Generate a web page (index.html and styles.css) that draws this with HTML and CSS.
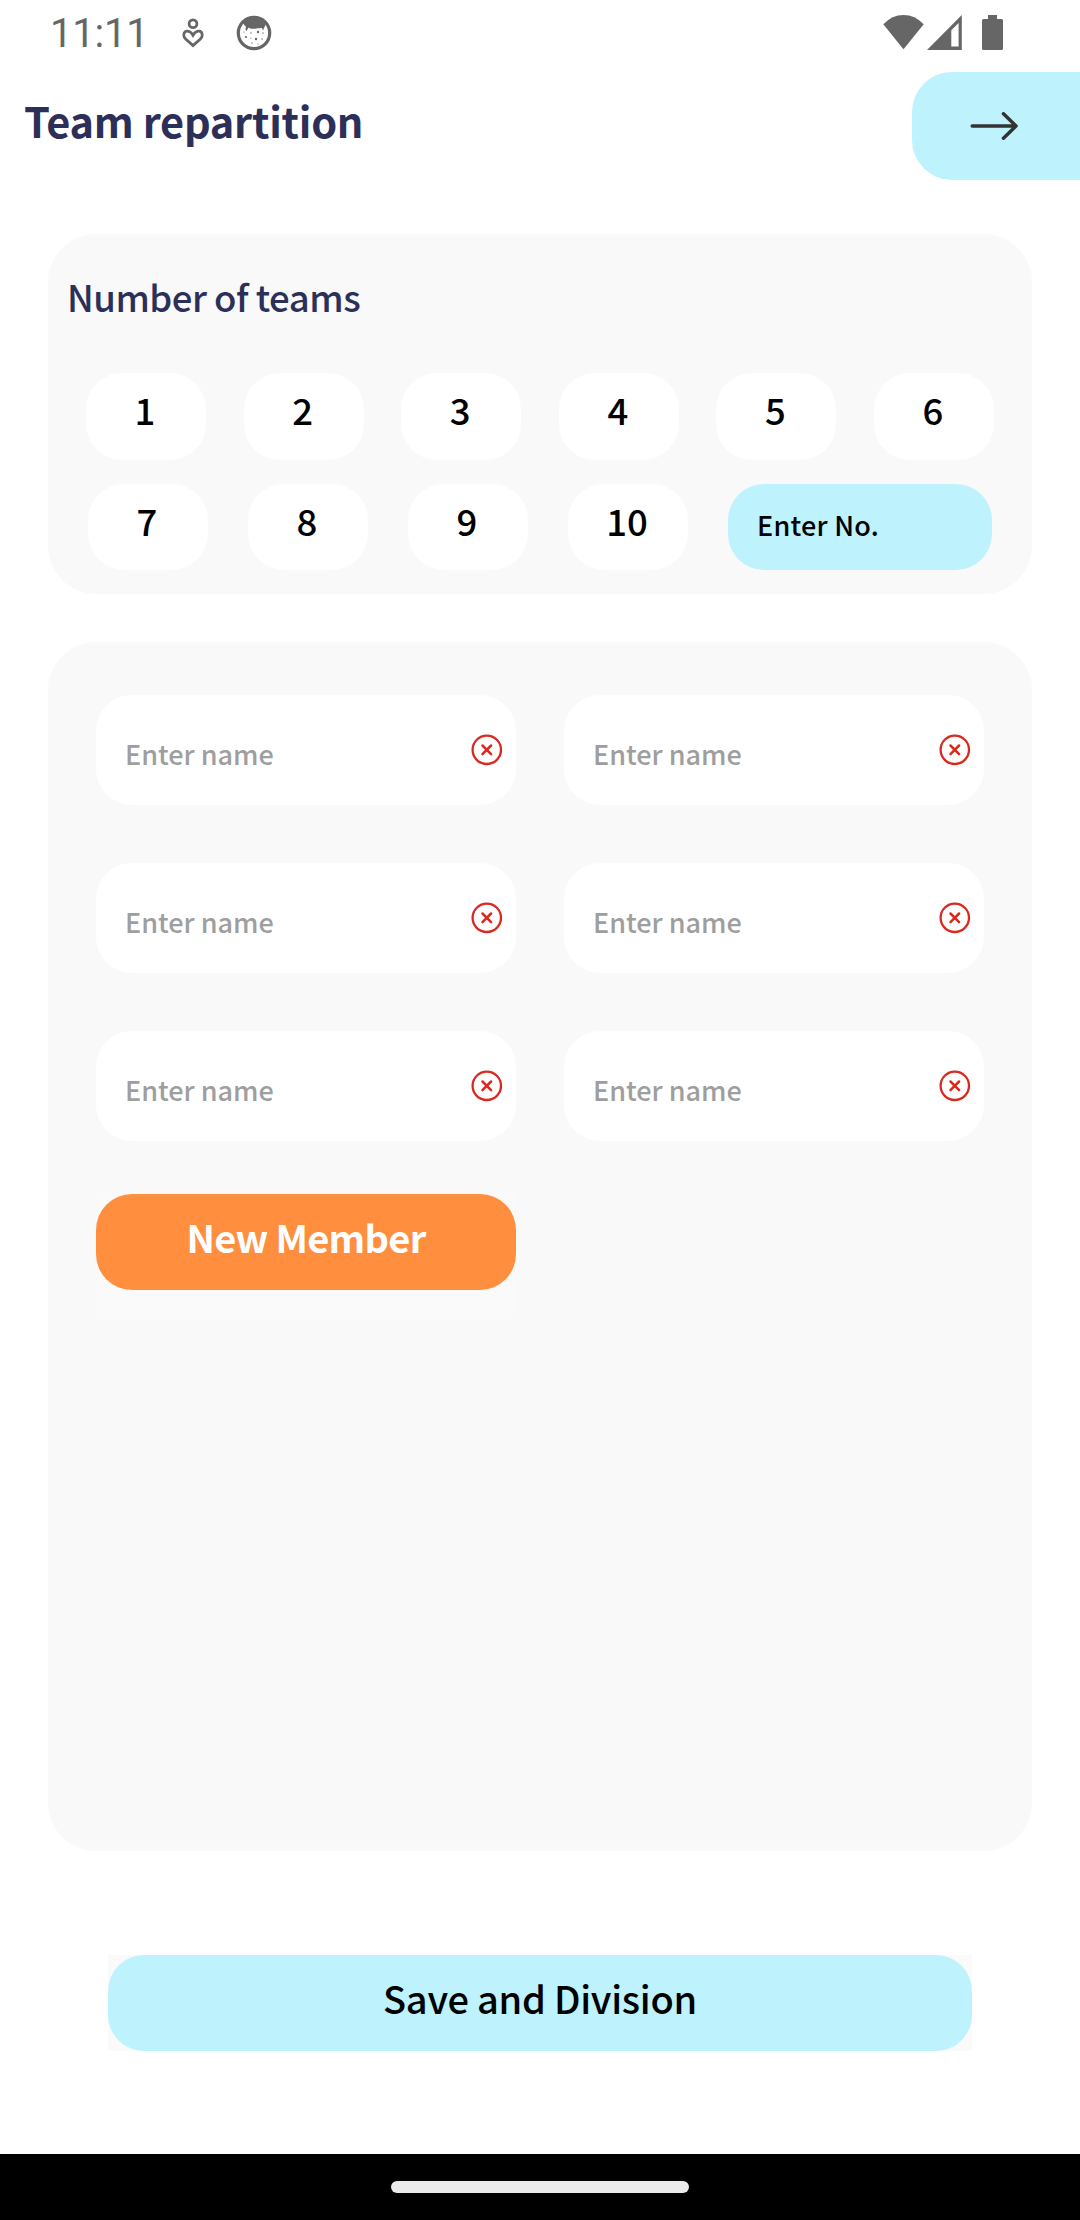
FILE: index.html
```html
<!DOCTYPE html>
<html lang="en">
<head>
<meta charset="utf-8">
<title>Team repartition</title>
<link rel="stylesheet" href="styles.css">
</head>
<body>
<svg width="0" height="0" class="defs">
  <symbol id="remove" viewBox="0 0 32 32">
    <g fill="none" stroke="#d92a1f" stroke-linecap="round">
      <circle cx="15.800" cy="15.800" r="14.200" stroke-width="2.300"/>
      <path d="M11.500 11.500 20.100 20.100M20.100 11.500 11.500 20.100" stroke-width="2.500"/>
    </g>
  </symbol>
</svg>
<div class="screen">
  <div class="status">
    <span class="clock">11:11</span>
    <svg class="heart" width="24" height="32" viewBox="0 0 24 32">
      <g fill="none" stroke="#666" stroke-width="2.8">
        <circle cx="12" cy="6.7" r="3.9"/>
        <path d="M12 18.2C9.800 14.300 7.500 14.100 6 14.100C3.300 14.100 2.800 16.600 2.800 18.400C2.800 20.300 4 21.300 5.200 22.500L12 28.600L18.800 22.500C20 21.300 21.200 20.300 21.200 18.400C21.200 16.600 20.700 14.100 18 14.100C16.500 14.100 14.200 14.300 12 18.200Z"/>
      </g>
    </svg>
    <svg class="face" width="36" height="36" viewBox="0 0 36 36">
      <circle cx="18" cy="18" r="15.7" fill="#fff" stroke="#666" stroke-width="3.200"/>
      <path fill="#666" d="M5.500 8C9 3.500 13 1.800 18 1.800S27 3.500 30.500 8L28.500 12L27 15.500L25.800 12.800C23 14 22 12.800 20.500 13.500C18.500 14.200 16 13.500 14 13.500L12.500 12.500L10.500 16L9.500 14.800L10 11.500C9 11.500 8.500 10 7 8Z"/>
      <g fill="#666">
        <circle cx="22" cy="17" r="1.200"/><circle cx="10" cy="22" r="1.100"/><circle cx="20" cy="24" r="1.200"/>
        <circle cx="15" cy="18" r=".7"/><circle cx="27" cy="18" r=".7"/><circle cx="8" cy="17" r=".6"/>
        <circle cx="16" cy="28" r=".7"/><circle cx="26" cy="24" r=".7"/><circle cx="15" cy="23" r=".6"/><circle cx="22" cy="29" r=".6"/>
      </g>
    </svg>
    <svg class="signals" width="122" height="36" viewBox="0 0 122 36">
      <g fill="#666">
        <path d="M.3 9.300Q9 0 20.500 0T40.700 9.300L20.500 34.300Z"/>
        <path fill-rule="evenodd" d="M78.800 0V35H44ZM75.600 8 68.300 15.300V31.500H75.600Z"/>
        <path d="M105 0h9v4h4.500q1.500 0 1.500 1.500v28q0 1.500-1.500 1.500h-18q-1.500 0-1.500-1.500v-28q0-1.500 1.500-1.500h4.500z"/>
      </g>
    </svg>
  </div>

  <header class="header">
    <h1 class="title">Team repartition</h1>
    <div class="next">
      <svg width="48" height="28" viewBox="0 0 48 28" fill="none" stroke="#333" stroke-width="3.500" stroke-linecap="round" stroke-linejoin="round">
        <path d="M2.200 14H46M33.500 1.800 46 14 33.500 26.200"/>
      </svg>
    </div>
  </header>

  <section class="card teams">
    <h2 class="subtitle">Number of teams</h2>
    <div class="row first">
      <div class="tile">1</div><div class="tile">2</div><div class="tile">3</div><div class="tile">4</div><div class="tile">5</div><div class="tile">6</div>
    </div>
    <div class="row second">
      <div class="tile">7</div><div class="tile">8</div><div class="tile">9</div><div class="tile">10</div>
      <div class="custom">Enter No.</div>
    </div>
  </section>

  <section class="card members">
    <div class="grid">
      <div class="field"><span>Enter name</span><svg class="x"><use href="#remove"/></svg></div>
      <div class="field"><span>Enter name</span><svg class="x"><use href="#remove"/></svg></div>
      <div class="field"><span>Enter name</span><svg class="x"><use href="#remove"/></svg></div>
      <div class="field"><span>Enter name</span><svg class="x"><use href="#remove"/></svg></div>
      <div class="field"><span>Enter name</span><svg class="x"><use href="#remove"/></svg></div>
      <div class="field"><span>Enter name</span><svg class="x"><use href="#remove"/></svg></div>
    </div>
    <div class="add-wrap"><div class="button add"><span>New Member</span></div></div>
  </section>

  <div class="save-wrap"><div class="button save"><span>Save and Division</span></div></div>
  <div class="navbar"><div class="pill"></div></div>
</div>
</body>
</html>
```

FILE: styles.css
```css
* { box-sizing: border-box; }
body {
  margin: 0;
  background: #fff;
  font-family: "Noto Sans CJK SC", "Noto Sans", sans-serif;
  font-weight: 500;
  color: #000;
}
.defs { display: block; height: 0; }
.screen {
  width: 1080px;
  height: 2220px;
  display: flex;
  flex-direction: column;
  overflow: hidden;
}
.status {
  height: 72px;
  flex: none;
  display: flex;
  align-items: flex-start;
  padding: 15px 75px 0 50px;
}
.clock {
  width: 132px;
  font: 400 40px/38px Roboto, sans-serif;
  color: #666;
  letter-spacing: -0.2px;
}
.heart { margin-top: 2px; margin-left: -1px; }
.face { margin: 0 0 0 31px; }
.signals { margin-left: auto; }
.header {
  height: 108px;
  flex: none;
  display: flex;
  justify-content: space-between;
}
.title {
  margin: 0;
  padding-left: 24px;
  font-size: 41.5px;
  line-height: 96px;
  font-weight: 700;
  letter-spacing: -0.25px;
  color: #2c3058;
}
.next {
  width: 168px;
  display: flex;
  align-items: center;
  padding-left: 58px;
  background: #bef2fd;
  border-radius: 40px 0 0 40px;
}
.card {
  flex: none;
  margin: 0 48px;
  background: #f9f9f9;
  border-radius: 48px;
}
.teams { height: 360px; margin-top: 54px; }
.subtitle {
  margin: 0;
  height: 139px;
  padding: 13px 0 0 19px;
  font-size: 36.5px;
  line-height: 100px;
  font-weight: 500;
  letter-spacing: -0.5px;
  color: #2c3058;
}
.row { display: flex; justify-content: space-between; }
.first { padding: 0 38px; }
.second { padding: 0 40px; margin-top: 24px; }
.tile {
  width: 120px;
  height: 87px;
  padding-right: 2px;
  border-radius: 36px;
  background: #fff;
  font-size: 36.5px;
  line-height: 74px;
  text-align: center;
}
.second .tile, .custom { height: 86px; }
.second .tile { line-height: 73px; }
.custom {
  width: 264px;
  padding-left: 29px;
  border-radius: 36px;
  background: #bef2fd;
  font-size: 27px;
  line-height: 81px;
  letter-spacing: 0.25px;
}
.members { height: 1209px; margin-top: 48px; padding: 53px 48px 0; }
.grid {
  display: grid;
  grid-template-columns: 420px 420px;
  gap: 58px 48px;
}
.field {
  height: 110px;
  display: flex;
  align-items: center;
  justify-content: space-between;
  padding: 0 13px 0 29px;
  border-radius: 36px;
  background: #fff;
  color: #9e9e9e;
  font-size: 27px;
}
.field span { padding-top: 6px; }
.x { width: 32px; height: 32px; }
.add-wrap {
  width: 420px;
  height: 120px;
  margin-top: 53px;
  background: #fafafa;
}
.button {
  height: 96px;
  border-radius: 36px;
  font-size: 38px;
  line-height: 86px;
  letter-spacing: -0.3px;
  text-align: center;
}
.add { background: #ff8f3f; color: #fff; font-weight: 700; letter-spacing: -0.7px; }
.save-wrap { margin: 104px 108px 0 108px; background: #fafafa; }
.save { background: #bef2fd; }
.navbar {
  height: 66px;
  flex: none;
  margin-top: auto;
  padding-top: 27px;
  background: #000;
}
.pill {
  width: 298px;
  height: 12px;
  margin: 0 auto;
  border-radius: 6px;
  background: #ebebeb;
}
```
